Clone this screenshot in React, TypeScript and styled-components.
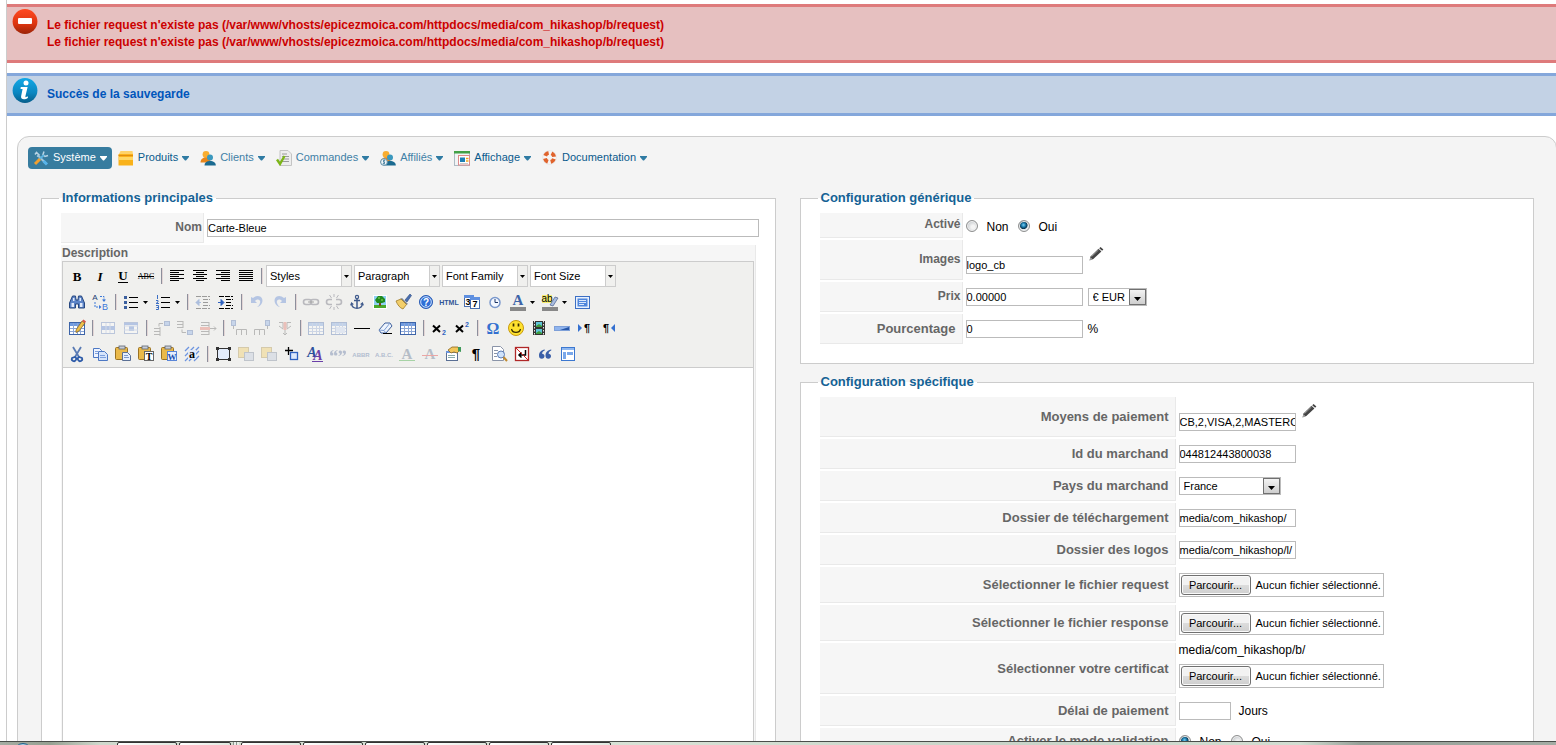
import React from "react";
import styled, { createGlobalStyle, css } from "styled-components";

const GlobalStyle = createGlobalStyle`
  *, *::before, *::after { box-sizing: border-box; }
  body { margin: 0; background: #fff; font: 12px "Liberation Sans", Arial, sans-serif; color: #000; }
  input, select, button, textarea { font-family: inherit; }
`;

/* ---------- page frame ---------- */

const Page = styled.div`
  height: 100vh;
  display: flex;
  flex-direction: column;
  overflow: hidden;
`;

const Main = styled.main`
  flex: 1;
  min-height: 0;
  margin-left: 6px;
  padding-top: 4px;
  border-left: 1px solid #ccc;
  overflow: hidden auto;
  scrollbar-width: none;
`;

const Alert = styled.div<{ $kind: "error" | "info" }>`
  display: flex;
  align-items: flex-start;
  gap: 9px;
  min-height: 43px;
  padding-left: 5px;
  border: solid ${(p) => (p.$kind === "error" ? "#de7a7b" : "#84a7db")};
  border-width: 3px 0;
  background: ${(p) => (p.$kind === "error" ? "#e6c0c0" : "#c3d2e5")};
  color: ${(p) => (p.$kind === "error" ? "#c00" : "#05b")};
  font-size: 12px;
  font-weight: bold;
  line-height: 17px;
  & + & { margin-top: 10px; }
  svg { margin-top: 2px; flex: none; }
`;

const AlertLines = styled.ul`
  list-style: none;
  margin: 0;
  padding: 10px 0 9px;
`;

const Panel = styled.section`
  margin: 20px -1px 0 10px;
  padding: 10px 22px 20px 10px;
  border: 1px solid #ccc;
  border-radius: 12px;
  background: #f4f4f4;
`;

/* ---------- menu ---------- */

const Menu = styled.nav`
  display: flex;
  gap: 1px;
  margin-bottom: 21px;
`;

const MenuItem = styled.a<{ $active?: boolean; $soft?: boolean }>`
  display: flex;
  align-items: center;
  gap: 4px;
  height: 22px;
  padding: 0 5px;
  border-radius: 4px;
  font-size: 11px;
  line-height: 20px;
  text-decoration: none;
  color: ${(p) => (p.$active ? "#fff" : p.$soft ? "#3f80a6" : "#0a5a8c")};
  background: ${(p) => (p.$active ? "#377c9f" : "transparent")};
  span { padding-bottom: 2px; }
`;

/* ---------- field sets ---------- */

const Columns = styled.div`
  display: grid;
  grid-template-columns: minmax(0, 1fr) minmax(0, 1fr);
  gap: 24px;
  margin-left: 13px;
`;

const Stack = styled.div`
  display: flex;
  flex-direction: column;
  gap: 10px;
`;

const FieldSet = styled.fieldset`
  min-width: 0;
  margin: 0;
  padding: 7px 19px 19px 17px;
  border: 1px solid #ccc;
  background: #fff;
`;

const Legend = styled.legend`
  padding: 0 3px;
  color: #146295;
  font-size: 13px;
  font-weight: bold;
  line-height: 16px;
`;

const Rows = styled.div`
  display: flex;
  flex-direction: column;
  gap: 2px;
  margin-left: 2px;
`;

const Row = styled.div<{ $h: number }>`
  display: flex;
  gap: 3px;
  min-height: ${(p) => p.$h}px;
`;

const labelCell = css<{ $w: number; $large?: boolean }>`
  flex: none;
  display: flex;
  align-items: center;
  justify-content: flex-end;
  width: ${(p) => p.$w}px;
  padding: ${(p) => (p.$large ? "0 6px 0 0" : "0 1px 2px 0")};
  border: solid #e9e9e9;
  border-width: 0 1px 1px 0;
  background: #f6f6f6;
  color: #666;
  font-size: ${(p) => (p.$large ? 13 : 12)}px;
  font-weight: bold;
  white-space: nowrap;
`;
const LabelCell = styled.label`${labelCell}`;
const GroupCell = styled.span`${labelCell}`;

const Value = styled.div<{ $gap?: number }>`
  flex: 1;
  min-width: 0;
  display: flex;
  align-items: center;
  gap: ${(p) => p.$gap ?? 5}px;
`;

const TallValue = styled.div`
  display: flex;
  align-items: stretch;
  align-self: center;
  gap: 5px;
  height: 28px;
  input { align-self: flex-end; }
`;

const FileValue = styled.div`
  display: flex;
  flex-direction: column;
  gap: 6px;
  line-height: 15px;
`;

const TextInput = styled.input<{ $w?: string }>`
  flex: none;
  width: ${(p) => p.$w ?? "117px"};
  height: 18px;
  padding: 0;
  border: 1px solid #bbb;
  background: #fff;
  color: #000;
  font-size: 11px;
  outline: none;
`;

const PlainButton = styled.button`
  display: flex;
  padding: 0;
  border: 0;
  background: none;
`;

const Radio = styled.input`
  appearance: none;
  width: 12px;
  height: 12px;
  margin: 0 9px 2px 0;
  border: 1px solid #8e8f8f;
  border-radius: 50%;
  background: radial-gradient(circle at 60% 60%, #f4f4f4 20%, #c4c8cc 75%);
  box-shadow: inset 0 0 0 1px #f0f0f0;
  &:checked {
    background: radial-gradient(circle at 45% 40%, #7fd0f4 0, #1a7cad 25%, #0b3550 45%, #dfe5e8 55%);
  }
`;

const RadioLabel = styled.label`
  display: flex;
  align-items: center;
  padding-top: 3px;
`;

const SelectBox = styled.span<{ $w: number }>`
  position: relative;
  display: inline-flex;
  width: ${(p) => p.$w}px;
  height: 18px;
  select {
    appearance: none;
    width: 100%;
    padding: 0 18px 0 4px;
    border: 1px solid #bbb;
    border-radius: 0;
    background: #fff;
    color: #000;
    font-size: 11px;
  }
  svg {
    position: absolute;
    top: 1px;
    right: 1px;
    pointer-events: none;
  }
`;

const FileBox = styled.label`
  position: relative;
  display: flex;
  align-items: center;
  gap: 5px;
  width: 205px;
  height: 24px;
  padding: 0 1px;
  border: 1px solid #bbb;
  background: #fff;
  font-size: 11px;
  white-space: nowrap;
  input {
    position: absolute;
    inset: 0;
    width: 100%;
    opacity: 0;
  }
`;

const BrowseFace = styled.span`
  flex: none;
  width: 70px;
  height: 20px;
  border: 1px solid #707070;
  border-radius: 3px;
  background: linear-gradient(#f2f2f2 0 48%, #dcdcdc 52%, #cfcfcf);
  box-shadow: inset 0 0 0 1px #fafafa;
  line-height: 18px;
  text-align: center;
`;

/* ---------- editor ---------- */

const NameInput = styled(TextInput)`
  flex: 1;
  margin: 6px -3px 0 0;
`;

const EditorCell = styled.div`
  padding: 0 1px;
  border-right: 1px solid #e9e9e9;
  background: #f6f6f6;
`;

const EditorLabel = styled.label`
  display: block;
  color: #666;
  font-size: 12px;
  font-weight: bold;
  line-height: 16px;
`;

const Editor = styled.div`
  border: 1px solid #ccc;
  background: #fff;
`;

const ToolBar = styled.div`
  padding: 1px 2px 0;
  border-bottom: 1px solid #ccc;
  background: #f0f0ee;
`;

const ToolRow = styled.div`
  display: flex;
  align-items: center;
  height: 26px;
`;

const Tool = styled.button<{ $split?: boolean; $off?: boolean }>`
  flex: none;
  display: flex;
  align-items: center;
  justify-content: flex-start;
  width: ${(p) => (p.$split ? 32 : 23)}px;
  height: 22px;
  padding: 0 1px 0 2px;
  border: 0;
  background: none;
  svg { flex: none; opacity: ${(p) => (p.$off ? 0.35 : 1)}; }
  svg + svg { margin-left: 2px; }
`;

const Divider = styled.span`
  flex: none;
  width: 2px;
  height: 16px;
  margin: 0 2px 0 4px;
  border-left: 1px solid #8d8f9c;
  border-right: 1px solid #e3d6d6;
`;

const ToolSelect = styled.span`
  position: relative;
  width: 86px;
  height: 22px;
  margin: 0 1px;
  select {
    appearance: none;
    width: 100%;
    height: 100%;
    padding: 0 12px 0 3px;
    border: 1px solid #ccc;
    border-radius: 0;
    background: linear-gradient(to left, #f0f0ee 0 9px, #ccc 9px 10px, #fff 10px);
    color: #000;
    font-size: 11px;
  }
  svg {
    position: absolute;
    top: 10px;
    right: 3px;
    pointer-events: none;
  }
`;

const EditorText = styled.textarea`
  display: block;
  width: 100%;
  height: 480px;
  padding: 8px;
  border: 0;
  outline: none;
  resize: none;
`;

/* ---------- task bar ---------- */

const TaskBar = styled.footer`
  flex: none;
  display: flex;
  gap: 2px;
  height: 4px;
  padding-left: 14px;
  border-top: 1px solid #4a4d4a;
  background: linear-gradient(to right, #a5ada3, #96a092 50px, #cfd9cd 100px, #d8e2d6 640px, #c8d4c8 1000px, #d2ded2 1300px, #96a098 1360px, #a4aca4);
  overflow: hidden;
`;

const StartOrb = styled.span`
  width: 18px;
  height: 18px;
  margin: 1px 83px 0 0;
  border: 1px solid #1d5f8c;
  border-radius: 50%;
  background: #a8d0e4;
`;

const TaskTab = styled.span<{ $w: number }>`
  width: ${(p) => p.$w}px;
  height: 8px;
  border: 1px solid #333;
  border-radius: 2px;
  background: linear-gradient(to right, #fff, #dfe8df);
`;

const TaskGrip = styled.span`
  width: 6px;
  height: 8px;
  background: repeating-linear-gradient(to right, #8d958d 0 1px, #e8eee8 1px 3px);
`;

/* ---------- drawings ---------- */

const Caret = ({ fill = "#2f7ba3" }: { fill?: string }) => (
  <svg width="7" height="5" viewBox="0 0 7 5" aria-hidden="true">
    <path d="M0 0h7v1L4 4.600H3L0 1z" fill={fill} />
  </svg>
);

const SmallArrow = () => (
  <svg width="5" height="3" viewBox="0 0 5 3" aria-hidden="true">
    <path d="M0 0h5L2.500 3z" fill="#000" />
  </svg>
);

const DropButton = () => (
  <svg width="17" height="16" viewBox="0 0 17 16" aria-hidden="true">
    <defs>
      <linearGradient id="drop" x1="0" y1="0" x2="0" y2="1">
        <stop offset="0" stopColor="#f4f4f4" />
        <stop offset="1" stopColor="#cdcdcd" />
      </linearGradient>
    </defs>
    <rect x=".5" y=".5" width="16" height="15" fill="url(#drop)" stroke="#707070" />
    <path d="M5 8h7L8.500 12z" fill="#000" />
  </svg>
);

const Pencil = () => (
  <svg width="16" height="16" viewBox="0 0 16 16" aria-hidden="true">
    <path d="M1.500 14.500l1-4L10.500 2.800l2.900 2.700L5.300 13z" fill="#444" />
    <path d="M3.500 10.600l7-6.600" stroke="#999" strokeWidth="1" />
    <path d="M11.200 2.200L12.600.9l2.800 2.500-1.300 1.400z" fill="#444" />
    <path d="M2.500 11.500l2 1.800-2.500.8z" fill="#bbb" />
  </svg>
);

const ErrorBadge = () => (
  <svg width="26" height="26" viewBox="0 0 26 26" aria-hidden="true">
    <defs>
      <linearGradient id="err" x1="0" y1="0" x2="0" y2="1">
        <stop offset="0" stopColor="#ff4a22" />
        <stop offset=".6" stopColor="#dc3510" />
        <stop offset="1" stopColor="#9a2408" />
      </linearGradient>
    </defs>
    <circle cx="13" cy="12.500" r="12.400" fill="url(#err)" />
    <rect x="6" y="9" width="14" height="6" rx="1" fill="#fff" />
  </svg>
);

const InfoBadge = () => (
  <svg width="26" height="26" viewBox="0 0 26 26" aria-hidden="true">
    <defs>
      <linearGradient id="inf" x1="0" y1="0" x2="0" y2="1">
        <stop offset="0" stopColor="#12a8e6" />
        <stop offset=".6" stopColor="#0a86c0" />
        <stop offset="1" stopColor="#065d8a" />
      </linearGradient>
    </defs>
    <circle cx="13" cy="12.500" r="12.400" fill="url(#inf)" />
    <circle cx="14" cy="5" r="2.500" fill="#fff" />
    <path d="M8.800 9h6.800l-2.200 9.300c-.2 1.200.8 1 2.200 0l.4 1.400c-2.800 2.400-7.600 2.200-6.900-1.400l1.500-7.300H8.500z" fill="#fff" />
  </svg>
);

const people = (
  <>
    <circle cx="6" cy="4.500" r="3.400" fill="#f8ad30" />
    <path d="M.5 12.500c0-3 2-5 5.500-5s4.500 2 4.500 5z" fill="#e8861a" />
    <circle cx="10" cy="7.500" r="3" fill="#3a98be" />
    <path d="M4.500 15.500c0-3 2-4.500 5.500-4.500s5.800 1.500 5.800 4.500z" fill="#1a6a90" />
  </>
);

const menuIcons: Record<string, React.ReactNode> = {
  tools: (
    <>
      <path d="M11 1.500l-1 3 2 2 3-1M2 4.500l1.500-2 2.500 2.500-2 1.500" fill="none" stroke="#b9d4e4" strokeWidth="1.500" />
      <path d="M5 5.500l8 8" stroke="#9fc5dc" strokeWidth="2" />
      <path d="M6 9.500L11 5" stroke="#5db4e0" strokeWidth="2" />
      <path d="M2 14l5-5" stroke="#f0a030" strokeWidth="3" />
      <path d="M10.500 11l3.500 3.500" stroke="#58b4ea" strokeWidth="3" />
    </>
  ),
  box: (
    <>
      <path d="M1 4l1.500-3h12L15 4z" fill="#ffd36a" />
      <rect x=".5" y="4" width="14.500" height="3" fill="#fbb21c" />
      <rect x=".5" y="7" width="14.500" height="8.500" fill="#f9b21a" />
      <path d="M.5 5.500h14.500" stroke="#e08d10" />
      <path d="M1 8.500h14" stroke="#ffd766" strokeWidth="3" />
    </>
  ),
  people,
  order: (
    <>
      <path d="M4 .5h8L15.500 4v11.500H4z" fill="#ededed" stroke="#c4c4c4" />
      <path d="M6 4h5M6 6.500h7M6 9h7M6 11.500h7" stroke="#9a9a9a" />
      <path d="M1 9.500l3 4.500L8.500 6" fill="none" stroke="#7cb518" strokeWidth="2.400" />
    </>
  ),
  affiliate: (
    <>
      {people}
      <circle cx="4" cy="12" r="3.400" fill="#f4f8fa" stroke="#5a8ba5" />
      <path d="M5.200 10.500c-2-1-2.400 1-1.200 1.500s1 2-1.200 1.500M4 9.500v5" fill="none" stroke="#2b6c8f" strokeWidth=".8" />
    </>
  ),
  display: (
    <>
      <rect x=".5" y="1.500" width="15" height="14" fill="#f1f4f6" stroke="#aebbc4" />
      <rect x="0" y="1" width="16" height="2.500" fill="#43a047" />
      <rect x="4.500" y="5.500" width="11" height="9.500" fill="#fff" stroke="#dd8a8a" />
      <rect x="6" y="7.500" width="5" height="4.500" fill="#1d7fb5" />
      <path d="M12 8.500h2.500M12 11h2.500" stroke="#f2a51c" strokeWidth="1.500" />
      <path d="M6 13.500h8" stroke="#ccc" />
    </>
  ),
  help: (
    <>
      <circle cx="7.500" cy="7.500" r="4.700" fill="none" stroke="#f8f4f2" strokeWidth="4" />
      <circle cx="7.500" cy="7.500" r="4.700" fill="none" stroke="#e0632c" strokeWidth="4" strokeDasharray="4.400 2.983" strokeDashoffset="-1.500" />
      <circle cx="7.500" cy="7.500" r="6.900" fill="none" stroke="#ddd" strokeWidth=".5" />
    </>
  ),
};

const T = (p: { x?: number; y?: number; s: number; c?: string; serif?: boolean; i?: boolean; b?: boolean; children: React.ReactNode }) => (
  <text
    x={p.x ?? 10}
    y={p.y ?? 14}
    fontSize={p.s}
    fill={p.c ?? "#000"}
    textAnchor="middle"
    fontFamily={p.serif ? "Liberation Serif, serif" : "Liberation Sans, sans-serif"}
    fontStyle={p.i ? "italic" : "normal"}
    fontWeight={p.b === false ? "normal" : "bold"}
  >
    {p.children}
  </text>
);

const lines = (rows: [number, number][], top = 4, step = 2) => (
  <path d={rows.map(([a, b], i) => `M${a} ${top + 0.5 + i * step}H${b}`).join("")} stroke="#000" />
);

const grid = (
  <>
    <rect x="2.500" y="4.500" width="15" height="12" fill="#fff" stroke="#3d64a8" />
    <rect x="3" y="5" width="14" height="3" fill="#6f9be0" />
    <path d="M3 10.500h14M3 13.500h14M6.500 5v11M10.500 5v11M13.500 5v11" stroke="#8ba6d6" />
  </>
);

const clip = (
  <>
    <rect x="2.500" y="3.500" width="12" height="12" rx="1" fill="#eab94a" stroke="#9a7223" />
    <rect x="6" y="2" width="6" height="3" fill="#c9ced8" stroke="#5d6470" strokeWidth=".8" />
  </>
);

const layerBack = (
  <>
    <rect x="2.500" y="3.500" width="10" height="10" fill="#f0c84e" stroke="#a58430" />
    <rect x="8.500" y="8.500" width="9" height="8" fill="#b8c4d8" stroke="#66748c" />
  </>
);

const quoteMark = "M5 0C2 .4 0 2.300 0 5.200 0 7 .9 8 2.400 8S4.800 7 4.800 5.700 4 3.600 2.700 3.600C2.800 2.300 3.600 1.300 5 .9z";

const icons: Record<string, React.ReactNode> = {
  bold: <T s={13} serif y={15}>B</T>,
  italic: <T s={13} serif i y={15}>I</T>,
  underline: (<><T s={13} serif y={14}>U</T><path d="M5 16.500h10" stroke="#000" /></>),
  strike: (<><T s={8} serif b={false} y={13}>ABC</T><path d="M2 10.500h16" stroke="#000" /></>),
  left: lines([[3, 17], [3, 12], [3, 17], [3, 12], [3, 17], [3, 12]]),
  center: lines([[3, 17], [6, 14], [3, 17], [6, 14], [3, 17], [6, 14]]),
  right: lines([[3, 17], [8, 17], [3, 17], [8, 17], [3, 17], [8, 17]]),
  full: lines([[3, 17], [3, 17], [3, 17], [3, 17], [3, 17], [3, 17]]),
  search: (
    <>
      <path d="M2.500 11l3-7h3l.5 4h2l.5-4h3l3 7v5h-6v-4h-3v4h-6z" fill="#5d85c8" stroke="#27477f" />
      <path d="M4.500 11h2.500v4H4.500zM13 11h2.500v4H13zM6 6h1.500v3H6zM12.500 6H14v3h-1.500z" fill="#dfe9fa" />
    </>
  ),
  replace: (
    <>
      <T s={8} x={5} y={8} b={false} c="#223c73">A</T>
      <T s={9} x={15} y={18} b={false} c="#3c78d8">B</T>
      <path d="M10 4.500h4v4M5 10v5h5" fill="none" stroke="#3c78d8" strokeDasharray="2 1" />
      <path d="M12 7.500h4L14 10zM9 13v4l2.500-2z" fill="#3c78d8" />
    </>
  ),
  bullets: (
    <>
      <path d="M8 5.500h9M8 10.500h9M8 15.500h9" stroke="#000" />
      <path d="M3 4h3v3H3zM3 9h3v3H3zM3 14h3v3H3z" fill="#3b5f9e" />
    </>
  ),
  numbers: (
    <>
      <path d="M8 5.500h9M8 10.500h9M8 15.500h9" stroke="#000" />
      <path d="M4.500 3v4M3 8.500h2v1.500l-2 1.500h3M3 13.500h2.500v4H3M3.500 15.500h2" fill="none" stroke="#3c6fc4" />
    </>
  ),
  outdent: (
    <>
      <path d="M3 4.500h14M10 7.500h7M10 10.500h5M10 13.500h7M3 16.500h14" stroke="#000" strokeDasharray="5 1" />
      <path d="M8 10.500H3M6 7.500l-3 3 3 3z" stroke="#2f62c0" fill="#2f62c0" />
    </>
  ),
  indent: (
    <>
      <path d="M3 4.500h14M10 7.500h7M10 10.500h5M10 13.500h7M3 16.500h14" stroke="#000" strokeDasharray="5 1" />
      <path d="M2 10.500h5M5 7.500l3 3-3 3z" stroke="#2f62c0" fill="#2f62c0" />
    </>
  ),
  undo: <path d="M4 5v6h6L8 9c3-3 6-1 5 2-.3 1.500-1.500 3-3 4 4-1 6.500-5 5-8.500-2-3.500-6-3-9-.5z" fill="#4a78d0" />,
  redo: <path d="M16 5v6h-6l2-2c-3-3-6-1-5 2 .3 1.500 1.500 3 3 4-4-1-6.500-5-5-8.500 2-3.500 6-3 9-.5z" fill="#4a78d0" />,
  link: (
    <>
      <rect x="2.500" y="7.500" width="8" height="5" rx="2.500" fill="none" stroke="#556" strokeWidth="1.600" />
      <rect x="9.500" y="7.500" width="8" height="5" rx="2.500" fill="none" stroke="#556" strokeWidth="1.600" />
      <path d="M7 10h6" stroke="#222" />
    </>
  ),
  unlink: (
    <>
      <path d="M8 7.500H5a2.500 2.500 0 000 5h3M12 7.500h3a2.500 2.500 0 010 5h-3" fill="none" stroke="#556" strokeWidth="1.600" />
      <path d="M10 2v3M5.500 3l2 3M14.500 3l-2 3M10 15v3M5.500 17l2-3M14.500 17l-2-3" stroke="#556" />
    </>
  ),
  anchor: (
    <>
      <circle cx="10" cy="5" r="1.600" fill="none" stroke="#3f5a8c" strokeWidth="1.200" />
      <path d="M10 6.500v9.500M7 8.500h6M4.500 12c.5 3 3 4.300 5.500 4.300s5-1.300 5.500-4.300" fill="none" stroke="#3f5a8c" strokeWidth="1.500" />
      <path d="M3 13.500l1.300-3.500L7 12.300zM17 13.500L15.700 10 13 12.300z" fill="#3f5a8c" />
    </>
  ),
  image: (
    <>
      <rect x="3.500" y="3.500" width="13" height="13" fill="#8fd0f2" stroke="#fff" />
      <path d="M4 13h12v3H4z" fill="#4aa82a" />
      <path d="M9 9h2v5H9z" fill="#7a4a1c" />
      <path d="M5 8l3-4h4l3 3v3l-3 1H7z" fill="#1f8a1f" />
      <path d="M8 6h2M11 8h2" stroke="#8ee05a" />
    </>
  ),
  clean: (
    <>
      <path d="M12 8l5-6 1.500 1.500L14 10z" fill="#4a6fb0" stroke="#2c4a80" strokeWidth=".6" />
      <path d="M9 6l6 6-2 1-6-6z" fill="#7a8290" />
      <path d="M3 9l5-2 5.500 5.500L10 17c-3-1-5.500-4-7-8z" fill="#f2ce6a" stroke="#a07c28" strokeWidth=".8" />
    </>
  ),
  help: (
    <>
      <circle cx="10" cy="10" r="6.500" fill="#2f6fd6" stroke="#2a5cb4" />
      <circle cx="10" cy="10" r="5.300" fill="none" stroke="#cfe0fa" />
      <T s={10} c="#fff" y={13.5}>?</T>
    </>
  ),
  html: <T s={7} c="#2f5496" y={12.5}>HTML</T>,
  date: (
    <>
      <rect x="2.500" y="3.500" width="9" height="11" fill="#fff" stroke="#4a6fb0" />
      <rect x="8.500" y="5.500" width="9" height="11" fill="#fff" stroke="#4a6fb0" />
      <path d="M2 3h10v3H2zM8 5h10v3H8z" fill="#5f90e0" />
      <T s={9} x={6} y={13}>3</T>
      <T s={9} x={13} y={15}>7</T>
    </>
  ),
  time: (
    <>
      <circle cx="10" cy="10.500" r="5" fill="#f4f8ff" stroke="#7a98cc" strokeWidth="1.500" />
      <path d="M10 7v3.500h3" fill="none" stroke="#1c3566" />
    </>
  ),
  fore: (<><T s={15} serif c="#3d64a8" y={13}>A</T><rect x="2" y="15" width="16" height="4" fill="#888" /></>),
  back: (
    <>
      <rect x="2" y="3" width="10" height="8" fill="#f6ef72" />
      <T s={10} x={7} y={10} b={false}>ab</T>
      <path d="M10 13l5-8 3 1-5 8z" fill="#a9bde0" stroke="#4a5f8c" strokeWidth=".7" />
      <rect x="2" y="15" width="16" height="4" fill="#888" />
    </>
  ),
  fullscreen: (
    <>
      <rect x="3.500" y="4.500" width="14" height="12" fill="#e9f1fd" stroke="#3c6fc4" />
      <rect x="5.500" y="6.500" width="10" height="8" fill="#4f86dc" />
      <path d="M7 8.500h7M7 10.500h7M7 12.500h5" stroke="#dbe8fc" />
    </>
  ),
  table: (
    <>
      {grid}
      <path d="M9 12l6-9 3 2-6 8-3 1.500z" fill="#eec04a" stroke="#7a5a1c" strokeWidth=".7" />
      <path d="M15 3l1.500-1.500L19 3.500 18 5z" fill="#d8564a" />
    </>
  ),
  rowprops: (<><rect x="3.500" y="4.500" width="13" height="11" fill="#fff" stroke="#5a7ab8" /><path d="M3 8h14v4H3z" fill="#4a78d0" /><path d="M8 5v10M12 5v10" stroke="#9db4dd" /></>),
  cellprops: (<><rect x="3.500" y="4.500" width="13" height="11" fill="#fff" stroke="#5a7ab8" /><path d="M3 5h14v2H3zM8 8h5v5H8z" fill="#4a78d0" /><path d="M3 8h14M3 12h14" stroke="#9db4dd" /></>),
  rowbefore: (<><path d="M2 10.500h6M2 13.500h6M2 16.500h6M8 9v9M11 5.500H7v3" fill="none" stroke="#555" /><rect x="12.500" y="3.500" width="5" height="4" fill="#7ea4e4" stroke="#3d64a8" /></>),
  rowafter: (<><path d="M2 3.500h6M2 6.500h6M2 9.500h6M8 3v7M7 11.500v3h4" fill="none" stroke="#555" /><rect x="12.500" y="12.500" width="5" height="4" fill="#7ea4e4" stroke="#3d64a8" /></>),
  rowdel: (<><path d="M3 4.500h8M3 7.500h8M3 13.500h8M3 16.500h8M11 4v13" stroke="#555" fill="none" /><path d="M2 9h10v3H2z" fill="#e36a5a" /><path d="M12 10.500h6M16 8.500l2 2-2 2" fill="none" stroke="#555" /></>),
  colbefore: (<><rect x="2.500" y="2.500" width="4" height="5" fill="#7ea4e4" stroke="#3d64a8" /><path d="M4.500 8v3M7.500 17v-5.500h10V17M12.500 12v5" fill="none" stroke="#555" /></>),
  colafter: (<><rect x="13.500" y="2.500" width="4" height="5" fill="#7ea4e4" stroke="#3d64a8" /><path d="M15.500 8v3M2.500 17v-5.500h10V17M7.500 12v5" fill="none" stroke="#555" /></>),
  coldel: (<><path d="M4 4.500h4v6M16 4.500h-4v6M4 8l4 3M16 8l-4 3M10 12v5M8 15l2 2 2-2" fill="none" stroke="#555" /><path d="M8.500 4h3v8h-3z" fill="#e36a5a" /></>),
  split: grid,
  merge: (<>{grid}<rect x="7" y="9" width="9" height="6" fill="#c4d6f4" /></>),
  rule: <path d="M2 10.500h16" stroke="#000" />,
  eraser: (
    <>
      <path d="M4 12l6-7h5l2 3-6 7H6z" fill="#eef4fd" stroke="#3d5f9c" />
      <path d="M4 12l5 .5 6-7.500M9 12.500L11 15" fill="none" stroke="#7f9fd4" />
      <path d="M8 15.500h9" stroke="#000" />
    </>
  ),
  visual: grid,
  sub: (<><path d="M4 7.500l7 6.500M11 7.500l-7 6.500" stroke="#000" strokeWidth="2" /><T s={7} x={15} y={17} c="#2f62c0">2</T></>),
  sup: (<><path d="M4 7.500l7 6.500M11 7.500l-7 6.500" stroke="#000" strokeWidth="2" /><T s={7} x={15} y={9} c="#2f62c0">2</T></>),
  omega: <T s={16} serif c="#3470d0" y={16}>Ω</T>,
  smile: (
    <>
      <circle cx="10" cy="10" r="7.500" fill="#ffe22e" stroke="#c89a10" />
      <path d="M7.500 5.500v3M12.500 5.500v3" stroke="#3a2c00" strokeWidth="1.700" />
      <path d="M5.500 11c1 4.500 8 4.500 9 0" fill="none" stroke="#3a2c00" strokeWidth="1.200" />
    </>
  ),
  media: (
    <>
      <rect x="4" y="3" width="12" height="14" fill="#333" />
      <path d="M5.500 3v14M14.500 3v14" stroke="#e8e8e8" strokeDasharray="1.500 1.500" />
      <path d="M7 4h6v5H7zM7 11h6v5H7z" fill="#5fc4d8" />
      <path d="M7 8l3-2 3 2v1H7zM7 15l3-2 3 2v1H7z" fill="#3f9a3a" />
    </>
  ),
  advrule: (<><rect x="2.500" y="8.500" width="15" height="4" fill="#8fb4ee" stroke="#7ea0d8" /><path d="M8 12h9V9z" fill="#2757a8" /></>),
  ltr: (<><path d="M3 6v8l4-4z" fill="#3470d0" /><T s={11} x={12} y={14}>¶</T></>),
  rtl: (<><path d="M17 6v8l-4-4z" fill="#3470d0" /><T s={11} x={8} y={14}>¶</T></>),
  cut: (
    <>
      <path d="M6 3l6 10M14 3L8 13" stroke="#5a7bb4" strokeWidth="1.800" />
      <path d="M8 13a2.200 2.200 0 11-3 1zM12 13a2.200 2.200 0 103 1z" fill="none" stroke="#2c5aa8" strokeWidth="1.700" />
    </>
  ),
  copy: (
    <>
      <path d="M3.500 4.500h6l2 2v7h-8z" fill="#eef4ff" stroke="#4d78c4" />
      <path d="M8.500 7.500h6l3 3v6h-9z" fill="#d6e4fb" stroke="#4d78c4" />
      <path d="M5 7.500h4M5 9.500h3M10 11.500h5M10 13.500h6" stroke="#7ea0dc" />
    </>
  ),
  paste: (<>{clip}<path d="M9.500 8.500h5l3 3v5h-8z" fill="#e6eefc" stroke="#5a6f94" /><path d="M11 11.500h4M11 13.500h5" stroke="#7e98c8" /></>),
  pasteText: (<>{clip}<rect x="8.500" y="7.500" width="9" height="9" fill="#fff" stroke="#666" /><T s={10} serif x={13} y={16}>T</T></>),
  pasteWord: (<>{clip}<rect x="8.500" y="7.500" width="9" height="9" fill="#e8f0ff" stroke="#5a86d8" /><T s={9} serif x={13} y={15.5} c="#2050b0">W</T></>),
  selectAll: (
    <>
      <path d="M3 7l4-4M3 12l9-9M3 17L17 3M7 17L17 7M12 17l5-5" stroke="#6d94e0" strokeWidth="1.300" />
      <rect x="6" y="6" width="8" height="9" fill="#dfe9fc" />
      <T s={12} serif y={14}>a</T>
    </>
  ),
  layer: (
    <>
      <rect x="4.500" y="4.500" width="12" height="11" fill="#e2ecfb" stroke="#333" />
      <path d="M3 3h3v3H3zM15 3h3v3h-3zM3 14h3v3H3zM15 14h3v3h-3z" fill="#333" />
    </>
  ),
  forward: layerBack,
  backward: layerBack,
  absolute: (<><path d="M3 6.500h8M6.500 3v8" stroke="#000" strokeWidth="1.300" /><rect x="8.500" y="8.500" width="7" height="7" fill="#dce8fb" stroke="#2f62c0" strokeWidth="1.300" /></>),
  style: (<><T s={14} serif i x={7} y={13} c="#2b4f9c">A</T><T s={14} serif i x={13} y={16} c="#6a3fa8">A</T><path d="M7 17.500h11" stroke="#6a3fa8" /></>),
  cite: (
    <g fill="#4a6296">
      <path d={quoteMark} transform="translate(2 6) scale(.7)" />
      <path d={quoteMark} transform="translate(6 6) scale(.7)" />
      <path d={quoteMark} transform="translate(14 12) rotate(180) scale(.7)" />
      <path d={quoteMark} transform="translate(18 12) rotate(180) scale(.7)" />
    </g>
  ),
  abbr: <T s={6} c="#3a5a96" y={12.5}>ABBR</T>,
  acronym: <T s={6} c="#3a5a96" y={12.5}>A.B.C.</T>,
  ins: (<><T s={15} serif c="#4a5f80" y={15}>A</T><path d="M2 16.500h16" stroke="#22a022" /></>),
  del: (<><T s={15} serif c="#4a5f80" y={15}>A</T><path d="M2 11.500h16" stroke="#e02020" /></>),
  attribs: (
    <>
      <rect x="3.500" y="7.500" width="11" height="9" fill="#fff" stroke="#5a6f94" />
      <path d="M3 7h12v2H3z" fill="#6a94dc" />
      <path d="M5 11.500h7M5 13.500h7" stroke="#8aa" />
      <path d="M5 6l4-3h6l2 3-3 3-3-1-3 1z" fill="#f2c65a" stroke="#8a6420" strokeWidth=".8" />
      <path d="M15 3h3v5l-3-1z" fill="#3f9a5a" />
    </>
  ),
  visualchars: <T s={15} y={15}>¶</T>,
  preview: (
    <>
      <path d="M3.500 2.500h8l3 3v11h-11z" fill="#fff" stroke="#8a94a8" />
      <path d="M5 6.500h4M5 9.500h3M5 12.500h3" stroke="#8a94a8" />
      <circle cx="12" cy="10.500" r="3.500" fill="#cfe2fa" stroke="#5a7bb4" />
      <path d="M14.500 13l3.500 4" stroke="#c08a30" strokeWidth="2" />
    </>
  ),
  nobreak: (
    <>
      <rect x="3.500" y="3.500" width="13" height="13" fill="#fff" stroke="#b02828" strokeWidth="1.300" />
      <path d="M13.500 6v5H7M9.500 8.500L7 11l2.500 2.500" fill="none" stroke="#000" strokeWidth="1.500" />
      <path d="M4 4l12 12" stroke="#d02020" />
    </>
  ),
  quote: (
    <g fill="#3a5fa8">
      <path d={quoteMark} transform="translate(4 5.500) scale(1.150)" />
      <path d={quoteMark} transform="translate(10.500 5.500) scale(1.150)" />
    </g>
  ),
  template: (
    <>
      <rect x="3.500" y="3.500" width="13" height="13" fill="#fff" stroke="#3c78d0" />
      <path d="M4 4h12v2H4z" fill="#8fb8f0" />
      <path d="M5 8h3v7H5zM9 8h6v3H9z" fill="#7aa8ea" />
    </>
  ),
};

/* ---------- toolbar data: "|" is a divider, "-" marks a disabled tool, "+" a split one ---------- */

const toolRows = [
  "bold italic underline strike | left center right full |",
  "search replace | +bullets +numbers | -outdent indent | -undo -redo | -link -unlink anchor image clean help html date time +fore +back fullscreen",
  "table | -rowprops -cellprops | -rowbefore -rowafter -rowdel | -colbefore -colafter -coldel | -split -merge rule eraser visual | sub sup | omega smile media advrule ltr rtl",
  "cut copy paste pasteText pasteWord selectAll | layer -forward -backward absolute style -cite -abbr -acronym -ins -del attribs visualchars preview nobreak quote template",
];

const ToolItems = ({ spec }: { spec: string }) => (
  <>
    {spec.split(" ").map((word, i) => {
      if (word === "|") return <Divider key={i} />;
      const off = word[0] === "-";
      const split = word[0] === "+";
      const name = off || split ? word.slice(1) : word;
      return (
        <Tool key={i} type="button" aria-label={name} $off={off} $split={split}>
          <svg width="20" height="20" viewBox="0 0 20 20" aria-hidden="true">{icons[name]}</svg>
          {split && <SmallArrow />}
        </Tool>
      );
    })}
  </>
);

const menu = [
  { text: "Système", icon: "tools", active: true },
  { text: "Produits", icon: "box" },
  { text: "Clients", icon: "people", soft: true },
  { text: "Commandes", icon: "order", soft: true },
  { text: "Affiliés", icon: "affiliate", soft: true },
  { text: "Affichage", icon: "display" },
  { text: "Documentation", icon: "help" },
];

const YesNo = ({ name, yes }: { name: string; yes: boolean }) => (
  <Value $gap={9} role="radiogroup" aria-labelledby={`${name}-label`}>
    <RadioLabel><Radio type="radio" name={name} defaultChecked={!yes} />Non</RadioLabel>
    <RadioLabel><Radio type="radio" name={name} defaultChecked={yes} />Oui</RadioLabel>
  </Value>
);

const FilePicker = ({ id }: { id: string }) => (
  <FileBox>
    <BrowseFace>Parcourir...</BrowseFace>
    <span>Aucun fichier sélectionné.</span>
    <input id={id} type="file" />
  </FileBox>
);

const Drop = ({ id, w, option }: { id: string; w: number; option: string }) => (
  <SelectBox $w={w}>
    <select id={id} aria-label={option} defaultValue={option}>
      <option>{option}</option>
    </select>
    <DropButton />
  </SelectBox>
);

const errorText =
  "Le fichier request n'existe pas (/var/www/vhosts/epicezmoica.com/httpdocs/media/com_hikashop/b/request)";

const Generic = () => (
  <FieldSet>
    <Legend>Configuration générique</Legend>
    <Rows>
      <Row $h={25}>
        <GroupCell $w={143} id="enabled-label">Activé</GroupCell>
        <YesNo name="enabled" yes />
      </Row>
      <Row $h={40}>
        <LabelCell $w={143} htmlFor="images">Images</LabelCell>
        <TallValue>
          <TextInput id="images" defaultValue="logo_cb" />
          <PlainButton type="button" aria-label="Modifier les images"><Pencil /></PlainButton>
        </TallValue>
      </Row>
      <Row $h={30}>
        <LabelCell $w={143} htmlFor="price">Prix</LabelCell>
        <Value>
          <TextInput id="price" defaultValue="0.00000" />
          <Drop id="currency" w={59} option="€ EUR" />
        </Value>
      </Row>
      <Row $h={30}>
        <LabelCell $w={143} $large htmlFor="percent">Pourcentage</LabelCell>
        <Value>
          <TextInput id="percent" defaultValue="0" />
          <span>%</span>
        </Value>
      </Row>
    </Rows>
  </FieldSet>
);

const Specific = () => (
  <FieldSet>
    <Legend>Configuration spécifique</Legend>
    <Rows>
      <Row $h={40}>
        <LabelCell $w={356} $large htmlFor="means">Moyens de paiement</LabelCell>
        <TallValue>
          <TextInput id="means" defaultValue="CB,2,VISA,2,MASTERCARD,2" />
          <PlainButton type="button" aria-label="Modifier les moyens de paiement"><Pencil /></PlainButton>
        </TallValue>
      </Row>
      <Row $h={30}>
        <LabelCell $w={356} $large htmlFor="merchant">Id du marchand</LabelCell>
        <Value><TextInput id="merchant" defaultValue="044812443800038" /></Value>
      </Row>
      <Row $h={30}>
        <LabelCell $w={356} $large htmlFor="country">Pays du marchand</LabelCell>
        <Value><Drop id="country" w={102} option="France" /></Value>
      </Row>
      <Row $h={30}>
        <LabelCell $w={356} $large htmlFor="upload">Dossier de téléchargement</LabelCell>
        <Value><TextInput id="upload" defaultValue="media/com_hikashop/" /></Value>
      </Row>
      <Row $h={30}>
        <LabelCell $w={356} $large htmlFor="logos">Dossier des logos</LabelCell>
        <Value><TextInput id="logos" defaultValue="media/com_hikashop/l/" /></Value>
      </Row>
      <Row $h={36}>
        <LabelCell $w={356} $large htmlFor="request">Sélectionner le fichier request</LabelCell>
        <Value><FilePicker id="request" /></Value>
      </Row>
      <Row $h={36}>
        <LabelCell $w={356} $large htmlFor="response">Sélectionner le fichier response</LabelCell>
        <Value><FilePicker id="response" /></Value>
      </Row>
      <Row $h={51}>
        <LabelCell $w={356} $large htmlFor="certificate">Sélectionner votre certificat</LabelCell>
        <FileValue>
          <span>media/com_hikashop/b/</span>
          <FilePicker id="certificate" />
        </FileValue>
      </Row>
      <Row $h={30}>
        <LabelCell $w={356} $large htmlFor="delay">Délai de paiement</LabelCell>
        <Value $gap={8}>
          <TextInput id="delay" $w="52px" />
          <span>Jours</span>
        </Value>
      </Row>
      <Row $h={25}>
        <GroupCell $w={356} $large id="validation-label">Activer le mode validation</GroupCell>
        <YesNo name="validation" yes={false} />
      </Row>
    </Rows>
  </FieldSet>
);

export default function App() {
  return (
    <Page>
      <GlobalStyle />
      <Main>
        <Alert $kind="error" role="alert">
          <ErrorBadge />
          <AlertLines>
            <li>{errorText}</li>
            <li>{errorText}</li>
          </AlertLines>
        </Alert>
        <Alert $kind="info" role="status">
          <InfoBadge />
          <AlertLines>
            <li>Succès de la sauvegarde</li>
          </AlertLines>
        </Alert>
        <Panel>
          <Menu>
            {menu.map((m) => (
              <MenuItem key={m.text} href="#" $active={m.active} $soft={m.soft}>
                <svg width="16" height="16" viewBox="0 0 16 16" aria-hidden="true">{menuIcons[m.icon]}</svg>
                <span>{m.text}</span>
                <Caret fill={m.active ? "#fff" : undefined} />
              </MenuItem>
            ))}
          </Menu>
          <Columns>
            <FieldSet>
              <Legend>Informations principales</Legend>
              <Rows>
                <Row $h={30}>
                  <LabelCell $w={143} htmlFor="name">Nom</LabelCell>
                  <NameInput id="name" defaultValue="Carte-Bleue" />
                </Row>
                <EditorCell>
                  <EditorLabel htmlFor="description">Description</EditorLabel>
                  <Editor>
                    <ToolBar role="toolbar">
                      {toolRows.map((spec, i) => (
                        <ToolRow key={i}>
                          <ToolItems spec={spec} />
                          {i === 0 &&
                            ["Styles", "Paragraph", "Font Family", "Font Size"].map((s) => (
                              <ToolSelect key={s}>
                                <select aria-label={s}><option>{s}</option></select>
                                <SmallArrow />
                              </ToolSelect>
                            ))}
                        </ToolRow>
                      ))}
                    </ToolBar>
                    <EditorText id="description" />
                  </Editor>
                </EditorCell>
              </Rows>
            </FieldSet>
            <Stack>
              <Generic />
              <Specific />
            </Stack>
          </Columns>
        </Panel>
      </Main>
      <TaskBar>
        <StartOrb />
        <TaskTab $w={60} />
        <TaskTab $w={52} />
        <TaskGrip />
        {[0, 1, 2, 3, 4, 5].map((i) => <TaskTab key={i} $w={60} />)}
      </TaskBar>
    </Page>
  );
}
